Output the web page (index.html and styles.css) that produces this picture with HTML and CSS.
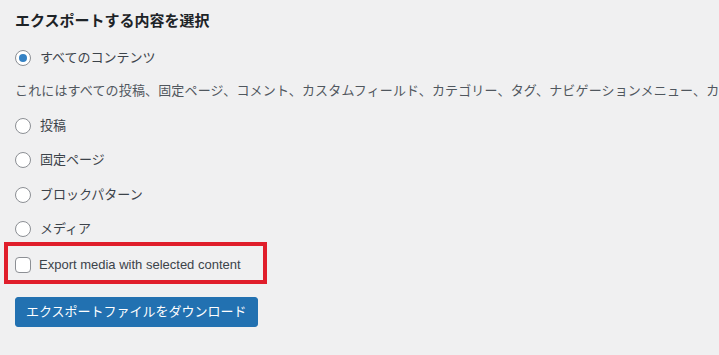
FILE: index.html
```html
<!DOCTYPE html>
<html lang="ja">
<head>
  <meta charset="UTF-8">
  <meta name="viewport" content="width=device-width, initial-scale=1.0">
  <title>エクスポート</title>
  <link rel="stylesheet" href="styles.css">
</head>
<body>

  <div class="wrap">
    <h2 class="title">エクスポートする内容を選択</h2>

    <form class="export-form">
      <label class="row first">
        <input type="radio" name="content" value="all" checked>
        <span>すべてのコンテンツ</span>
      </label>

      <p class="description">これにはすべての投稿、固定ページ、コメント、カスタムフィールド、カテゴリー、タグ、ナビゲーションメニュー、カスタム投稿が含まれます。</p>

      <label class="row">
        <input type="radio" name="content" value="posts">
        <span>投稿</span>
      </label>
      <label class="row">
        <input type="radio" name="content" value="pages">
        <span>固定ページ</span>
      </label>
      <label class="row">
        <input type="radio" name="content" value="wp_block">
        <span>ブロックパターン</span>
      </label>
      <label class="row">
        <input type="radio" name="content" value="attachment">
        <span>メディア</span>
      </label>

      <!-- 強調枠 -->
      <div class="highlight">
        <label class="row check">
          <input type="checkbox" name="export_media">
          <span>Export media with selected content</span>
        </label>
      </div>

      <button type="button" class="button-primary">エクスポートファイルをダウンロード</button>
    </form>
  </div>

</body>
</html>
```

FILE: styles.css
```css
body {
  margin: 0;
  background: #f0f0f1;
  color: #3c434a;
  font-family: "Liberation Sans", "Noto Sans CJK JP", sans-serif;
  font-size: 13px;
  overflow: hidden;
}

.wrap {
  padding: 10px 15px 0;
}

.title {
  margin: 0;
  font-size: 15px;
  line-height: 22px;
  font-weight: bold;
  color: #1d2327;
}

.export-form {
  display: flex;
  flex-direction: column;
  align-items: flex-start;
}

.row {
  display: flex;
  align-items: center;
  gap: 9px;
  height: 20px;
  line-height: 20px;
  margin-top: 14.5px;
  white-space: nowrap;
}

.row.first {
  margin-top: 16px;
}

.row input {
  appearance: none;
  -webkit-appearance: none;
  margin: 0;
  width: 16px;
  height: 16px;
  border: 1px solid #8c8f94;
  background: #fff;
  box-sizing: border-box;
  flex-shrink: 0;
}

.row input[type="radio"] {
  border-radius: 50%;
  display: flex;
  align-items: center;
  justify-content: center;
}

.row input[type="radio"]:checked::before {
  content: "";
  width: 8px;
  height: 8px;
  border-radius: 50%;
  background: #3582c4;
}

.row input[type="checkbox"] {
  border-radius: 4px;
}

.description {
  margin: 13px 0 0;
  width: 704px;
  overflow: hidden;
  line-height: 20px;
  color: #50575e;
  white-space: nowrap;
  letter-spacing: 0.15px;
}

/* 赤い強調枠 */
.highlight {
  margin: 2.5px 0 0 -11px;
  width: 263px;
  box-sizing: border-box;
  border: 4px solid #e01e2b;
  padding: 9px 0 5px 7px;
}

.highlight .row {
  margin-top: 0;
  gap: 8px;
}

.button-primary {
  margin-top: 13px;
  height: 30px;
  padding: 0 10px;
  background: #2271b1;
  color: #fff;
  border: 1px solid #2271b1;
  border-radius: 3px;
  font-family: "Liberation Sans", "Noto Sans CJK JP", sans-serif;
  font-size: 13px;
  line-height: 28px;
  cursor: pointer;
}
```
